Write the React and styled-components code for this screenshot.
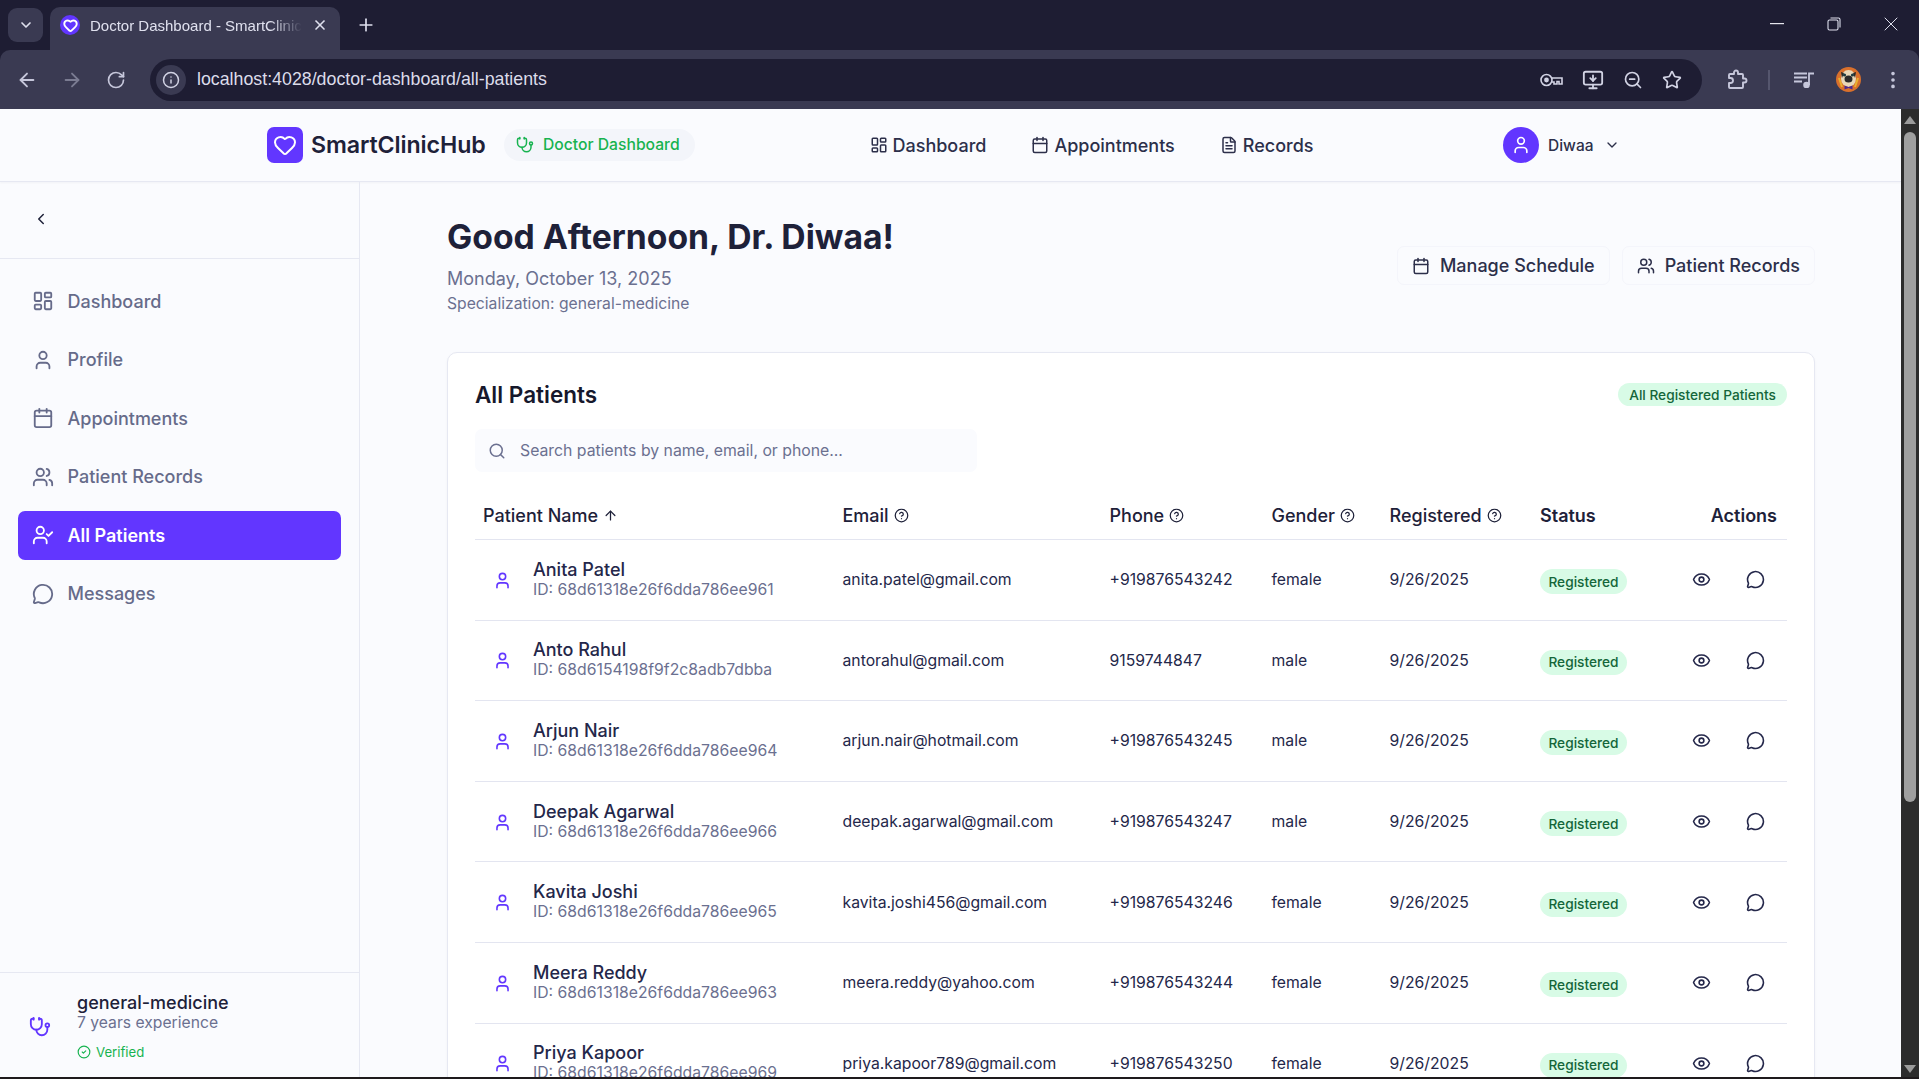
import React from "react";
import styled, { createGlobalStyle } from "styled-components";
import {
  ArrowLeft, ArrowRight, ArrowUp, Calendar, ChevronDown, ChevronLeft, CircleCheck, CircleHelp,
  EllipsisVertical, Eye, FileText, Heart, Info, LayoutDashboard, MessageCircle, MonitorDown,
  Plus, RotateCw, Search, Star, Stethoscope, User, UserCheck, Users, X, ZoomOut,
} from "lucide-react";

const GlobalStyle = createGlobalStyle`
  html, body { margin: 0; padding: 0; height: 100%; overflow: hidden; background: #1e1d33; }
  * { box-sizing: border-box; }
  body { font-family: Inter, "Liberation Sans", sans-serif; color: #1e2139; }
`;

const Screen = styled.div`
  width: 1919px;
  height: 1079px;
  display: flex;
  flex-direction: column;
  overflow: hidden;
`;

/* browser chrome */
const TabStrip = styled.div`
  height: 50px;
  flex: none;
  display: flex;
  align-items: flex-end;
  background: #1e1d33;
  padding-left: 8px;
  color: #dfe0ee;
`;

const TabMenu = styled.div`
  width: 35px;
  height: 34px;
  margin-bottom: 8px;
  border-radius: 9px;
  background: #3a3a52;
  display: flex;
  align-items: center;
  justify-content: center;
`;

const Tab = styled.div`
  width: 290px;
  height: 43px;
  margin-left: 7px;
  padding: 0 12px 7px 10px;
  border-radius: 10px 10px 0 0;
  background: #3a3a52;
  display: flex;
  align-items: center;
  gap: 10px;
  font-family: "Liberation Sans", sans-serif;
  font-size: 15px;
`;

const TabTitle = styled.span`
  flex: 1;
  white-space: nowrap;
  overflow: hidden;
  -webkit-mask-image: linear-gradient(to right, #000 85%, transparent);
  mask-image: linear-gradient(to right, #000 85%, transparent);
`;

const Favicon = styled.div`
  width: 20px;
  height: 20px;
  border-radius: 50%;
  background: #6236ff;
  flex: none;
  display: flex;
  align-items: center;
  justify-content: center;
`;

const NewTab = styled.div`
  margin: 0 0 15px 16px;
  height: 20px;
`;

const WindowControls = styled.div`
  margin-left: auto;
  align-self: flex-start;
  height: 48px;
  display: flex;
  align-items: center;
`;

const WindowButton = styled.div`
  width: 57px;
  display: flex;
  justify-content: center;
`;

const Toolbar = styled.div`
  height: 59px;
  flex: none;
  display: flex;
  align-items: center;
  background: #3a3a52;
  border-radius: 10px 10px 0 0;
  padding: 0 0 0 16px;
  color: #c6c7db;
`;

const NavIcons = styled.div`
  display: flex;
  align-items: center;
  gap: 23px;
  width: 134px;
  flex: none;
`;

const AddressBar = styled.div`
  width: 1552px;
  height: 42px;
  flex: none;
  border-radius: 21px;
  background: #1e1d33;
  display: flex;
  align-items: center;
  padding: 0 20px 0 6px;
  color: #d2d3e4;
`;

const SiteInfo = styled.div`
  width: 30px;
  height: 30px;
  border-radius: 50%;
  background: #3a3a52;
  display: flex;
  align-items: center;
  justify-content: center;
  margin-right: 11px;
`;

const Url = styled.span`
  flex: 1;
  font-family: "Liberation Sans", sans-serif;
  font-size: 17.8px;
  color: #dcdcea;
`;

const AddressIcons = styled.div`
  display: flex;
  align-items: center;
  gap: 19px;
`;

const ToolbarRight = styled.div`
  display: flex;
  align-items: center;
  flex: 1;
  padding-left: 25px;
`;

const ToolbarDivider = styled.div`
  width: 2px;
  height: 20px;
  background: #55566e;
  margin: 0 24px 0 20px;
`;

const ProfilePic = styled.div`
  width: 25px;
  height: 25px;
  margin: 0 21px 0 22px;
  flex: none;
`;

/* page viewport */
const Viewport = styled.div`
  flex: 1;
  min-height: 0;
  display: flex;
  background: #fafbfe;
  border-bottom: 2px solid #1e1a1c;
`;

const Page = styled.div`
  flex: 1;
  min-width: 0;
  display: flex;
  flex-direction: column;
`;

const Scrollbar = styled.div`
  width: 18px;
  flex: none;
  background: #2c2c2c;
  display: flex;
  flex-direction: column;
  align-items: center;
  padding-top: 7px;
`;

const ScrollArrow = styled.div`
  width: 0;
  height: 0;
  border-left: 6px solid transparent;
  border-right: 6px solid transparent;
  ${(p) => (p.$down ? "border-top: 8px solid #9b9b9b;" : "border-bottom: 8px solid #9b9b9b;")}
  ${(p) => p.$down && "margin-top: auto; margin-bottom: 4px;"}
`;

const ScrollThumb = styled.div`
  width: 12px;
  height: 670px;
  margin-top: 8px;
  border-radius: 6px;
  background: #9f9f9f;
`;

const Header = styled.header`
  height: 73px;
  flex: none;
  display: flex;
  align-items: center;
  border-bottom: 1px solid #e6e8f2;
  box-shadow: 0 1px 2px rgba(30, 33, 57, 0.04);
  padding-left: 267px;
`;

const LogoMark = styled.div`
  width: 36px;
  height: 36px;
  border-radius: 7px;
  background: #6236ff;
  display: flex;
  align-items: center;
  justify-content: center;
  flex: none;
`;

const LogoText = styled.div`
  font-size: 23.2px;
  font-weight: 600;
  margin-left: 8px;
  width: 193px;
  letter-spacing: -0.1px;
`;

const RolePill = styled.div`
  height: 32px;
  width: 191px;
  border-radius: 16px;
  background: #f3f5fa;
  display: flex;
  align-items: center;
  gap: 9px;
  padding: 0 0 1px 12px;
  color: #17b350;
  font-size: 15.7px;
  font-weight: 500;
`;

const TopNav = styled.nav`
  display: flex;
  gap: 45px;
  margin-left: 174.5px;
  width: 633.5px;
`;

const TopLink = styled.div`
  display: flex;
  align-items: center;
  gap: 5px;
  font-size: 18px;
  font-weight: 500;
  color: #2c2f4a;
`;

const UserMenu = styled.div`
  display: flex;
  align-items: center;
  font-size: 15.5px;
  font-weight: 500;
  color: #2c2f4a;
`;

const Avatar = styled.div`
  width: 36px;
  height: 36px;
  border-radius: 50%;
  background: #6236ff;
  display: flex;
  align-items: center;
  justify-content: center;
  margin-right: 9px;
`;

const MenuChevron = styled.span`
  display: flex;
  margin-left: 10px;
`;

const Body = styled.div`
  flex: 1;
  min-height: 0;
  display: flex;
`;

const Sidebar = styled.aside`
  width: 360px;
  flex: none;
  border-right: 1px solid #e6e8f2;
  display: flex;
  flex-direction: column;
`;

const Collapse = styled.div`
  height: 77px;
  flex: none;
  border-bottom: 1px solid #e6e8f2;
  padding: 0 0 2px 32px;
  display: flex;
  align-items: center;
  color: #1e2139;
`;

const SideNav = styled.nav`
  flex: 1;
  padding: 17.5px 18px 0;
  display: flex;
  flex-direction: column;
  gap: 9.6px;
`;

const SideItem = styled.div`
  height: 49px;
  padding-left: 14px;
  border-radius: 7px;
  display: flex;
  align-items: center;
  gap: 13.5px;
  font-size: 18px;
  font-weight: ${(p) => (p.$active ? 600 : 500)};
  color: ${(p) => (p.$active ? "#fff" : "#666b8a")};
  background: ${(p) => (p.$active ? "#6236ff" : "transparent")};
`;

const SideFooter = styled.div`
  height: 105px;
  flex: none;
  border-top: 1px solid #e6e8f2;
  padding: 18.5px 0 0 29px;
  display: flex;
  align-items: flex-start;
`;

const SpecIcon = styled.div`
  color: #6236ff;
  margin: 24px 26px 0 0;
`;

const SpecName = styled.div`
  font-size: 18px;
  font-weight: 500;
  line-height: 21px;
`;

const SpecYears = styled.div`
  font-size: 15.7px;
  line-height: 20px;
  color: #6b7090;
`;

const Verified = styled.div`
  display: flex;
  align-items: center;
  gap: 5px;
  margin-top: 9.5px;
  font-size: 13.2px;
  line-height: 20px;
  color: #17b350;
`;

const Main = styled.main`
  flex: 1;
  min-width: 0;
  padding: 32px 86px 0 87px;
  overflow: hidden;
`;

const Welcome = styled.div`
  display: flex;
  justify-content: space-between;
  align-items: flex-start;
  height: 138px;
`;

const Title = styled.h1`
  margin: 0;
  font-size: 33.7px;
  font-weight: 700;
  line-height: 46px;
`;

const DateLine = styled.div`
  font-size: 18px;
  line-height: 26px;
  margin-top: 6px;
  color: #6b7090;
`;

const SpecLine = styled.div`
  font-size: 15.7px;
  line-height: 22px;
  margin-top: 0.5px;
  color: #6b7090;
`;

const Actions = styled.div`
  display: flex;
  gap: 12px;
  margin-top: 32px;
`;

const GhostButton = styled.div`
  height: 39px;
  padding: 0 14px;
  display: flex;
  align-items: center;
  gap: 10px;
  border-radius: 7px;
  border: 1px solid #f4f5fb;
  font-size: 18px;
  font-weight: 500;
  color: #2c2f4a;
`;

const Card = styled.section`
  border: 1px solid #e6e8f2;
  border-radius: 10px;
  background: #fff;
  padding: 25.5px 27px 0;
  height: 760px;
  box-shadow: 0 1px 3px rgba(30, 33, 57, 0.04);
`;

const CardHead = styled.div`
  display: flex;
  justify-content: space-between;
  align-items: center;
  height: 32px;
`;

const CardTitle = styled.h2`
  margin: 0;
  font-size: 22.5px;
  font-weight: 600;
  color: #16182c;
`;

const CountBadge = styled.div`
  height: 23px;
  padding: 0 11px;
  border-radius: 12px;
  background: #d8fbe6;
  color: #14663a;
  font-size: 13.7px;
  font-weight: 500;
  display: flex;
  align-items: center;
`;

const SearchBox = styled.div`
  width: 502px;
  height: 43px;
  margin-top: 18.5px;
  border-radius: 7px;
  background: #fafbfe;
  padding-left: 13px;
  display: flex;
  align-items: center;
  gap: 14px;
  color: #6b7090;
  font-size: 15.8px;
`;

const Table = styled.div`
  margin-top: 24px;
`;

const cols = "359.5px 267px 162px 118px 150.5px 147.5px 1fr";

const HeadRow = styled.div`
  display: grid;
  grid-template-columns: ${cols};
  height: 44px;
  align-items: center;
  border-bottom: 1px solid #e3e5f0;
  font-size: 18px;
  padding: 0 10px 5px 8px;
`;

const HeadCell = styled.div`
  display: flex;
  align-items: center;
  gap: 5px;
  font-weight: ${(p) => (p.$bold ? 600 : 500)};
  ${(p) => p.$end && "justify-content: flex-end;"}
`;

const Row = styled.div`
  display: grid;
  grid-template-columns: ${cols};
  height: 80.6px;
  align-items: center;
  border-bottom: 1px solid #e3e5f0;
  font-size: 15.75px;
  padding: 0 8px;
  color: #24274a;
`;

const NameCell = styled.div`
  display: flex;
  align-items: center;
  gap: 21px;
  padding-left: 10px;
`;

const PersonIcon = styled.div`
  color: #6236ff;
  display: flex;
  margin-top: 1px;
`;

const PatientName = styled.div`
  font-size: 18px;
  font-weight: 500;
  line-height: 21px;
`;

const PatientId = styled.div`
  font-size: 15.75px;
  line-height: 19px;
  margin-bottom: 2px;
  color: #6b7090;
`;

const StatusPill = styled.div`
  width: 87px;
  height: 25px;
  margin-top: 4px;
  border-radius: 13px;
  background: #d8fbe6;
  color: #14663a;
  font-size: 13.7px;
  font-weight: 500;
  display: flex;
  align-items: center;
  justify-content: center;
`;

const RowActions = styled.div`
  display: flex;
  justify-content: flex-end;
  gap: 35px;
  padding-right: 14.5px;
  color: #24274a;
`;

const sideItems = [
  { label: "Dashboard", Icon: LayoutDashboard },
  { label: "Profile", Icon: User },
  { label: "Appointments", Icon: Calendar },
  { label: "Patient Records", Icon: Users },
  { label: "All Patients", Icon: UserCheck, active: true },
  { label: "Messages", Icon: MessageCircle },
];

const patients = [
  ["Anita Patel", "68d61318e26f6dda786ee961", "anita.patel@gmail.com", "+919876543242", "female"],
  ["Anto Rahul", "68d6154198f9f2c8adb7dbba", "antorahul@gmail.com", "9159744847", "male"],
  ["Arjun Nair", "68d61318e26f6dda786ee964", "arjun.nair@hotmail.com", "+919876543245", "male"],
  ["Deepak Agarwal", "68d61318e26f6dda786ee966", "deepak.agarwal@gmail.com", "+919876543247", "male"],
  ["Kavita Joshi", "68d61318e26f6dda786ee965", "kavita.joshi456@gmail.com", "+919876543246", "female"],
  ["Meera Reddy", "68d61318e26f6dda786ee963", "meera.reddy@yahoo.com", "+919876543244", "female"],
  ["Priya Kapoor", "68d61318e26f6dda786ee969", "priya.kapoor789@gmail.com", "+919876543250", "female"],
];

const Pug = () => (
  <svg width="25" height="25" viewBox="0 0 25 25">
    <circle cx="12.5" cy="12.5" r="12.5" fill="#d9702c" />
    <path d="M3 11l3 9M22 11l-3 9" stroke="#e8b030" strokeWidth="2" />
    <ellipse cx="12.5" cy="11.5" rx="7.5" ry="8.5" fill="#e8d8b8" />
    <path d="M5 5l3 1-2 5zM20 5l-3 1 2 5z" fill="#2a2a2a" />
    <ellipse cx="12.5" cy="12" rx="4" ry="3.5" fill="#2a2a2a" />
    <circle cx="8.5" cy="8" r="1.6" fill="#1c3a40" />
    <circle cx="16.5" cy="8" r="1.6" fill="#1c3a40" />
    <path d="M8.5 18.5l4 1.5 4-1.5v4l-4-1.5-4 1.5z" fill="#4b2a90" />
  </svg>
);

const KeyIcon = () => (
  <svg width="23" height="14" viewBox="0 0 23 14" fill="none" stroke="currentColor" strokeWidth="1.6">
    <circle cx="6.5" cy="7" r="5.5" />
    <circle cx="6.5" cy="7" r="1.6" fill="currentColor" />
    <path d="M12 5h10v6h-3V8.5h-2V11h-3V9h-2" />
  </svg>
);

const RestoreIcon = () => (
  <svg width="14" height="14" viewBox="0 0 14 14" fill="none" stroke="currentColor" strokeWidth="1.1">
    <rect x="1" y="3" width="10" height="10" rx="1.5" />
    <path d="M3.5 1h8a1.5 1.5 0 0 1 1.5 1.5v8" />
  </svg>
);

const ExtensionIcon = () => (
  <svg width="21" height="21" viewBox="0 0 21 21" fill="none" stroke="currentColor" strokeWidth="1.9" strokeLinejoin="round">
    <path d="M3 5h4V3.5a2 2 0 0 1 4 0V5h4a1 1 0 0 1 1 1v3.5h1.5a2 2 0 0 1 0 4H16V18a1 1 0 0 1-1 1H3a1 1 0 0 1-1-1v-4h1.5a2.5 2.5 0 0 0 0-5H2V6a1 1 0 0 1 1-1z" />
  </svg>
);

const MediaIcon = () => (
  <svg width="20" height="16" viewBox="0 0 20 16" fill="none" stroke="currentColor" strokeWidth="1.8">
    <path d="M0 1.5h13M0 5.5h13M0 9.5h8" />
    <path d="M15 13V1.5h5" />
    <circle cx="12.5" cy="13" r="2.4" fill="currentColor" />
  </svg>
);

export default function App() {
  return (
    <Screen>
      <GlobalStyle />
      <TabStrip>
        <TabMenu><ChevronDown size={16} strokeWidth={2.5} /></TabMenu>
        <Tab>
          <Favicon><Heart size={15} color="#fff" strokeWidth={3} /></Favicon>
          <TabTitle>Doctor Dashboard - SmartClinicHub</TabTitle>
          <X size={16} strokeWidth={2.5} />
        </Tab>
        <NewTab><Plus size={20} /></NewTab>
        <WindowControls>
          <WindowButton><svg width="14" height="2"><rect width="14" height="1.2" fill="#e6e6ee" /></svg></WindowButton>
          <WindowButton><RestoreIcon /></WindowButton>
          <WindowButton><X size={24} strokeWidth={1} /></WindowButton>
        </WindowControls>
      </TabStrip>
      <Toolbar>
        <NavIcons>
          <ArrowLeft size={22} />
          <ArrowRight size={22} color="#7b7c92" />
          <RotateCw size={20} />
        </NavIcons>
        <AddressBar>
          <SiteInfo><Info size={18} /></SiteInfo>
          <Url>localhost:4028/doctor-dashboard/all-patients</Url>
          <AddressIcons>
            <KeyIcon />
            <MonitorDown size={22} />
            <ZoomOut size={20} />
            <Star size={20} />
          </AddressIcons>
        </AddressBar>
        <ToolbarRight>
          <ExtensionIcon />
          <ToolbarDivider />
          <MediaIcon />
          <ProfilePic><Pug /></ProfilePic>
          <EllipsisVertical size={22} />
        </ToolbarRight>
      </Toolbar>
      <Viewport>
        <Page>
          <Header>
            <LogoMark><Heart size={24} color="#fff" /></LogoMark>
            <LogoText>SmartClinicHub</LogoText>
            <RolePill><Stethoscope size={18} />Doctor Dashboard</RolePill>
            <TopNav>
              <TopLink><LayoutDashboard size={18} />Dashboard</TopLink>
              <TopLink><Calendar size={18} />Appointments</TopLink>
              <TopLink><FileText size={18} />Records</TopLink>
            </TopNav>
            <UserMenu>
              <Avatar><User size={20} color="#fff" /></Avatar>
              Diwaa
              <MenuChevron><ChevronDown size={16} /></MenuChevron>
            </UserMenu>
          </Header>
          <Body>
            <Sidebar>
              <Collapse><ChevronLeft size={18} /></Collapse>
              <SideNav>
                {sideItems.map(({ label, Icon, active }) => (
                  <SideItem key={label} $active={active}>
                    <Icon size={22} strokeWidth={2} />
                    {label}
                  </SideItem>
                ))}
              </SideNav>
              <SideFooter>
                <SpecIcon><Stethoscope size={22} /></SpecIcon>
                <div>
                  <SpecName>general-medicine</SpecName>
                  <SpecYears>7 years experience</SpecYears>
                  <Verified><CircleCheck size={14} />Verified</Verified>
                </div>
              </SideFooter>
            </Sidebar>
            <Main>
              <Welcome>
                <div>
                  <Title>Good Afternoon, Dr. Diwaa!</Title>
                  <DateLine>Monday, October 13, 2025</DateLine>
                  <SpecLine>Specialization: general-medicine</SpecLine>
                </div>
                <Actions>
                  <GhostButton><Calendar size={18} />Manage Schedule</GhostButton>
                  <GhostButton><Users size={18} />Patient Records</GhostButton>
                </Actions>
              </Welcome>
              <Card>
                <CardHead>
                  <CardTitle>All Patients</CardTitle>
                  <CountBadge>All Registered Patients</CountBadge>
                </CardHead>
                <SearchBox><Search size={18} />Search patients by name, email, or phone...</SearchBox>
                <Table>
                  <HeadRow>
                    <HeadCell>Patient Name <ArrowUp size={15} /></HeadCell>
                    <HeadCell>Email <CircleHelp size={15} /></HeadCell>
                    <HeadCell>Phone <CircleHelp size={15} /></HeadCell>
                    <HeadCell>Gender <CircleHelp size={15} /></HeadCell>
                    <HeadCell>Registered <CircleHelp size={15} /></HeadCell>
                    <HeadCell $bold>Status</HeadCell>
                    <HeadCell $bold $end>Actions</HeadCell>
                  </HeadRow>
                  {patients.map(([name, id, email, phone, gender]) => (
                    <Row key={id}>
                      <NameCell>
                        <PersonIcon><User size={19} /></PersonIcon>
                        <div>
                          <PatientName>{name}</PatientName>
                          <PatientId>ID: {id}</PatientId>
                        </div>
                      </NameCell>
                      <div>{email}</div>
                      <div>{phone}</div>
                      <div>{gender}</div>
                      <div>9/26/2025</div>
                      <StatusPill>Registered</StatusPill>
                      <RowActions>
                        <Eye size={19} />
                        <MessageCircle size={19} />
                      </RowActions>
                    </Row>
                  ))}
                </Table>
              </Card>
            </Main>
          </Body>
        </Page>
        <Scrollbar>
          <ScrollArrow />
          <ScrollThumb />
          <ScrollArrow $down />
        </Scrollbar>
      </Viewport>
    </Screen>
  );
}
